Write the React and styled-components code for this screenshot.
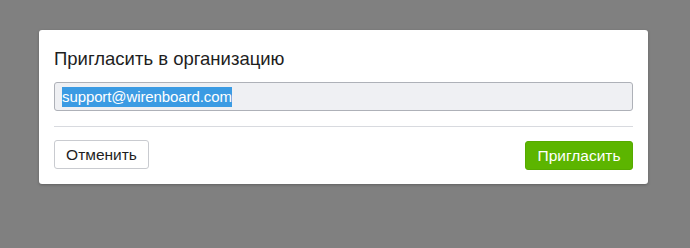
import React from "react";
import styled, { createGlobalStyle } from "styled-components";

const GlobalStyle = createGlobalStyle`
  html, body {
    margin: 0;
    padding: 0;
    background: #808080;
    font-family: "Liberation Sans", Arial, sans-serif;
  }
`;

const Backdrop = styled.div`
  width: 690px;
  height: 248px;
  background: #808080;
  padding: 30px 0 0 39px;
  box-sizing: border-box;
`;

const Dialog = styled.div`
  width: 609px;
  background: #fff;
  border-radius: 3px;
  box-shadow: 0 1px 3px rgba(0, 0, 0, 0.25);
  padding: 15px 15px 14px;
  box-sizing: border-box;
`;

const Title = styled.h3`
  margin: 0 0 12px;
  font-size: 18.5px;
  line-height: 23px;
  font-weight: 400;
  color: #1e1e1e;
  padding-top: 2px;
`;

const Field = styled.div`
  height: 29px;
  box-sizing: border-box;
  border: 1px solid #aeb1b8;
  border-radius: 3px;
  background: #eff0f3;
  display: flex;
  align-items: center;
  padding: 0 7px;
`;

const Selected = styled.span`
  background: #3b9be3;
  color: #fff;
  font-size: 15px;
  line-height: 20px;
  letter-spacing: -0.1px;
`;

const Divider = styled.hr`
  border: 0;
  border-top: 1px solid #d8dadf;
  margin: 15px 0 13px;
`;

const Footer = styled.div`
  display: flex;
  justify-content: space-between;
  align-items: flex-start;
`;

const Button = styled.button`
  height: 29px;
  box-sizing: border-box;
  padding: 0;
  width: ${(p) => (p.$primary ? "108px" : "95px")};
  font-family: inherit;
  font-size: 15.5px;
  border-radius: 3px;
  border: 1px solid ${(p) => (p.$primary ? "#56aa00" : "#c9cbd0")};
  background: ${(p) => (p.$primary ? "#5cb500" : "#fff")};
  color: ${(p) => (p.$primary ? "#fff" : "#1e1e1e")};
  margin-top: ${(p) => (p.$primary ? "1px" : "0")};
  cursor: pointer;
`;

export default function App() {
  return (
    <>
      <GlobalStyle />
      <Backdrop>
        <Dialog>
          <Title>Пригласить в организацию</Title>
          <Field>
            <Selected>support@wirenboard.com</Selected>
          </Field>
          <Divider />
          <Footer>
            <Button>Отменить</Button>
            <Button $primary>Пригласить</Button>
          </Footer>
        </Dialog>
      </Backdrop>
    </>
  );
}
